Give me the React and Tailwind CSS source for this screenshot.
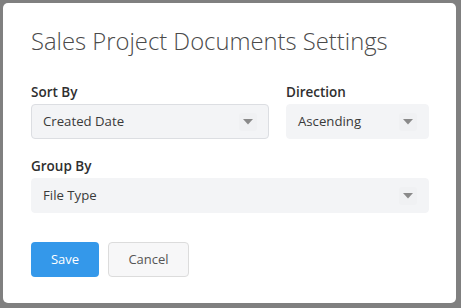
import { useState } from 'react';

const Caret = () => (
    <svg width="10" height="6" viewBox="0 0 10 6" className="shrink-0">
        <path d="M0 0 L10 0 L5 5.5 Z" fill="#8a8a8a" />
    </svg>
);

const SelectBox = ({ value, bordered, className = '' }) => (
    <div
        className={`h-[35px] flex items-center justify-between pl-[11px] pr-[11px] rounded-[4px] bg-[#f3f4f6] ${
            bordered ? 'border border-[#dcdee2]' : 'border border-[#f3f4f6]'
        } ${className}`}
    >
        <span className="text-[13.2px] text-[#3a3a3a]">{value}</span>
        <div className="w-[18px] h-[18px] flex items-center justify-center rounded-[3px] bg-[#f0f1f3]">
            <Caret />
        </div>
    </div>
);

const App = () => {
    const [sortBy] = useState('Created Date');
    const [direction] = useState('Ascending');
    const [groupBy] = useState('File Type');

    return (
        <div className="w-[461px] h-[308px] bg-[#808080] p-[3px] pr-[5px] pb-[5px] font-['Open_Sans',sans-serif]">
            <div className="w-[453px] h-[300px] bg-white rounded-[5px] pl-[28px] pr-[27px] pt-[22px]">
                <h2 className="text-[23.8px] font-light text-[#4a4a4a] leading-[32px]">
                    Sales Project Documents Settings
                </h2>

                <div className="mt-[26px] flex gap-[17px]">
                    <div className="w-[238px]">
                        <label className="block text-[13.5px] font-semibold text-[#2f2f2f] leading-[18px] mb-[3px]">Sort By</label>
                        <SelectBox value={sortBy} bordered />
                    </div>
                    <div className="w-[143px]">
                        <label className="block text-[13.5px] font-semibold text-[#2f2f2f] leading-[18px] mb-[3px]">Direction</label>
                        <SelectBox value={direction} />
                    </div>
                </div>

                <div className="mt-[18px]">
                    <label className="block text-[13.5px] font-semibold text-[#2f2f2f] leading-[18px] mb-[3px]">Group By</label>
                    <SelectBox value={groupBy} />
                </div>

                <div className="mt-[29px] flex gap-[9px]">
                    <button className="w-[68px] h-[35px] rounded-[4px] bg-[#3498ea] text-white text-[13px]">Save</button>
                    <button className="w-[81px] h-[35px] rounded-[4px] bg-[#f7f7f8] border border-[#dcdcdc] text-[#555] text-[13px]">
                        Cancel
                    </button>
                </div>
            </div>
        </div>
    );
};

export default App;
